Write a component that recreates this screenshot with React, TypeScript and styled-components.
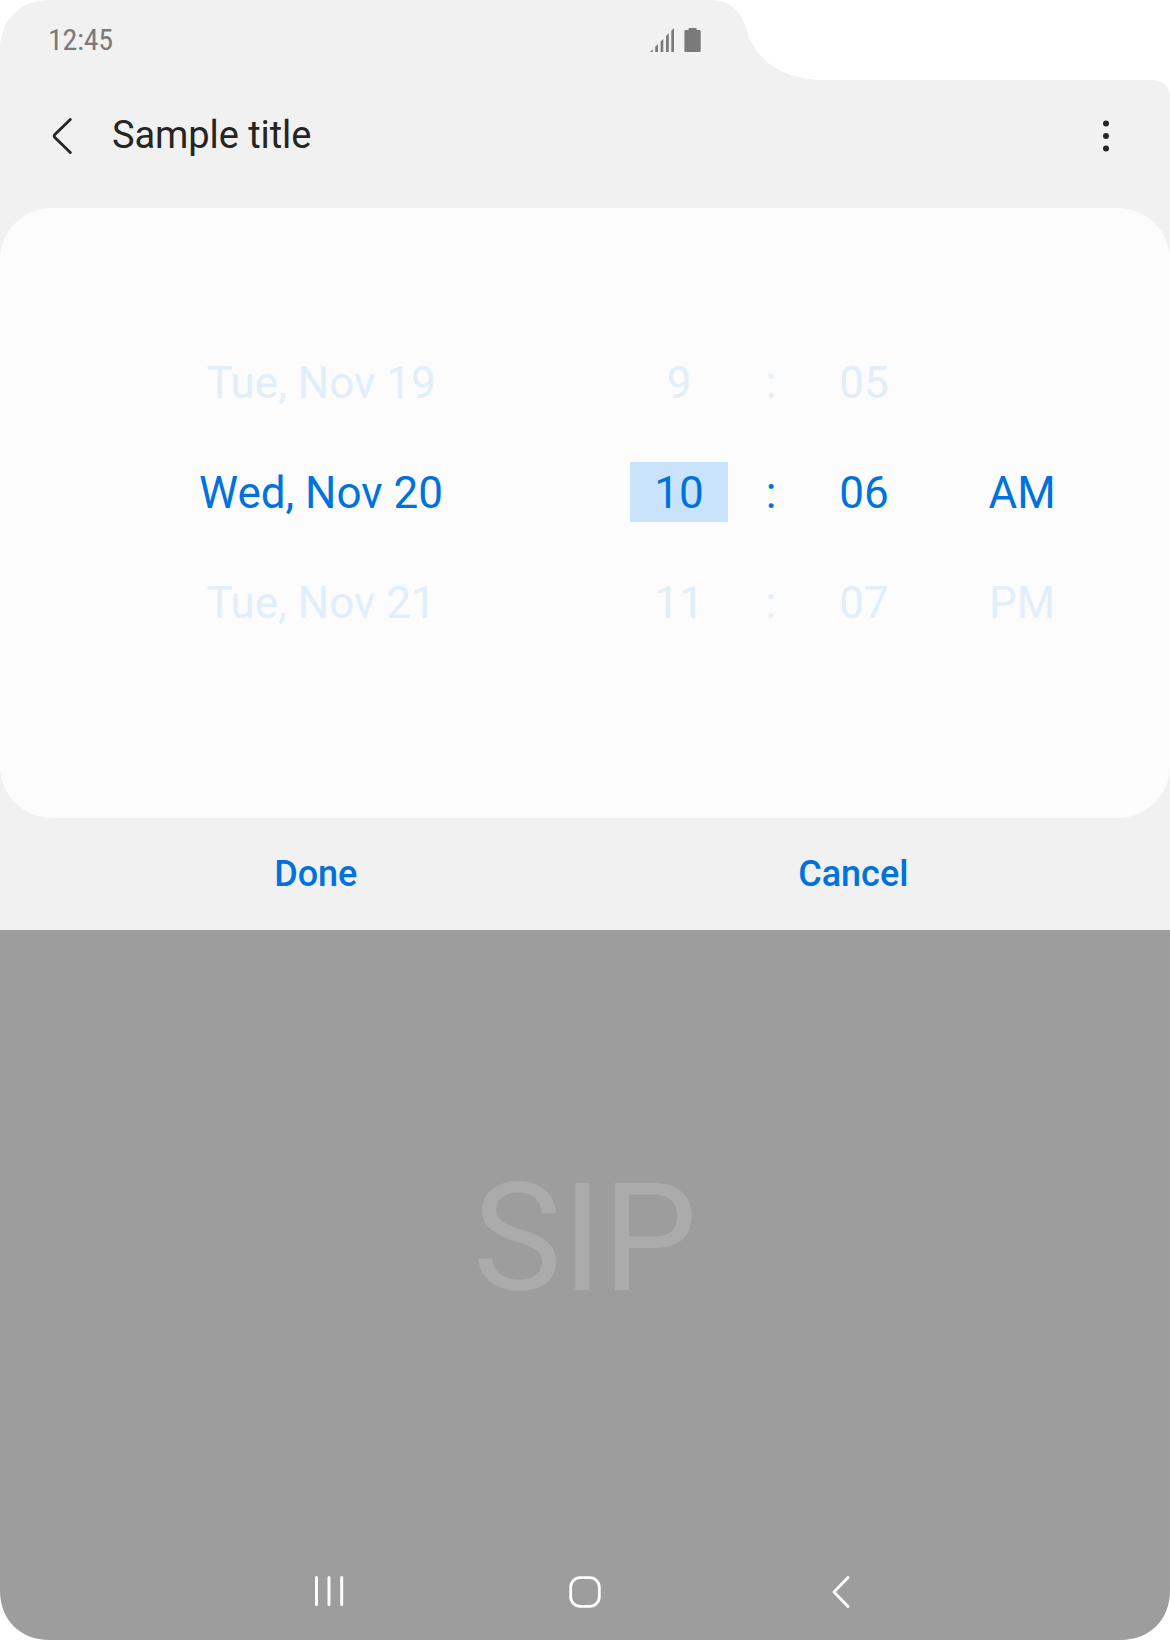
import React from "react";
import styled, { createGlobalStyle } from "styled-components";

const BLUE = "#0072de";
const DIM = "#e2eef9";

const GlobalStyle = createGlobalStyle`
  * { box-sizing: border-box; }
  body {
    margin: 0;
    background: #ffffff;
    font-family: Roboto, "Liberation Sans", sans-serif;
  }
  button {
    border: 0;
    padding: 0;
    background: none;
    font: inherit;
    color: inherit;
  }
  svg { display: block; }
`;

const Screen = styled.div`
  display: flex;
  flex-direction: column;
  width: 1170px;
  height: 1640px;
  overflow: hidden;
  background: #f1f1f1;
  clip-path: path("M0 50 C0 20 20 0 50 0 H712 C728 0 741 11 745.5 27 C753 54 775 80 826 80 H1153 C1163 80 1170 87 1170 97 V1590 C1170 1620 1150 1640 1120 1640 H50 C20 1640 0 1620 0 1590 Z");
`;

const StatusBar = styled.div`
  display: flex;
  align-items: center;
  justify-content: space-between;
  width: 701px;
  height: 80px;
  padding-left: 48px;
  color: #7a7a7a;
`;

const Clock = styled.span`
  font-family: "Roboto Condensed", Roboto, sans-serif;
  font-stretch: condensed;
  font-size: 30px;
  letter-spacing: -0.3px;
  line-height: 36px;
`;

const StatusIcons = styled.div`
  display: flex;
  gap: 10px;
`;

const Header = styled.header`
  display: flex;
  align-items: center;
  height: 128px;
  padding: 0 61px 16px 52px;
  color: #252525;
`;

const Title = styled.h1`
  flex: 1;
  margin: 0 0 0 40px;
  padding-bottom: 2px;
  font-size: 38px;
  font-weight: 400;
  letter-spacing: -0.08px;
  line-height: 46px;
`;

const PickerCard = styled.main`
  height: 610px;
  padding: 120px 0 0 30px;
  border-radius: 52px;
  background: #fcfcfc;
`;

const PickerRow = styled.div<{ $active?: boolean }>`
  display: grid;
  grid-template-columns: 582px 134px 50px 136px 180px;
  align-items: center;
  justify-items: center;
  height: 110px;
  font-size: 44px;
  line-height: 60px;
  color: ${(p) => (p.$active ? BLUE : DIM)};
`;

const Cell = styled.span<{ $selected?: boolean }>`
  ${(p) =>
    p.$selected &&
    `
    width: 98px;
    text-align: center;
    margin-top: -2px;
    padding-top: 1px;
    height: 60px;
    background: #c9e3fc;
  `}
`;

const Actions = styled.div`
  display: grid;
  grid-template-columns: 1fr 1fr;
  height: 112px;
  padding: 0 48px 0 47px;
`;

const ActionButton = styled.button`
  font-size: 36px;
  font-weight: 500;
  color: ${BLUE};
`;

const Keyboard = styled.section`
  display: flex;
  flex: 1;
  flex-direction: column;
  background: #9d9d9d;
`;

const KeyboardLabel = styled.div`
  display: flex;
  flex: 1;
  align-items: center;
  justify-content: center;
  padding-top: 4px;
  font-size: 150px;
  color: #ababab;
`;

const NavBar = styled.nav`
  display: grid;
  grid-template-columns: repeat(3, 256px);
  justify-content: center;
  height: 96px;
`;

const NavButton = styled.button`
  display: flex;
  align-items: center;
  justify-content: center;
  color: #ffffff;
`;

const rows = [
  { date: "Tue, Nov 19", hour: "9", minute: "05", period: "" },
  { date: "Wed, Nov 20", hour: "10", minute: "06", period: "AM" },
  { date: "Tue, Nov 21", hour: "11", minute: "07", period: "PM" },
];
const ACTIVE_ROW = 1;

const SignalIcon = () => (
  <svg width="24" height="24" viewBox="0 0 24 24" fill="currentColor">
    <path d="M0 24L2.7 21.3V24Z M5.2 24V18.8L8 16V24Z M10.6 24V13.4L13.3 10.7V24Z M16 24V8L18.8 5.2V24Z M21.3 24V2.7L24 0V24Z" />
  </svg>
);

const BatteryIcon = () => (
  <svg width="17" height="24" viewBox="0 0 17 24" fill="currentColor">
    <path d="M5.5 0H11.7Q12.7 0 12.7 1V2H15.5Q16.7 2 16.7 3.2V22.8Q16.7 24 15.5 24H1.6Q.4 24 .4 22.8V3.2Q.4 2 1.6 2H4.5V1Q4.5 0 5.5 0Z" />
  </svg>
);

const BackIcon = () => (
  <svg width="20" height="40" viewBox="0 0 20 40" fill="none" stroke="currentColor" strokeWidth="2.8" strokeLinecap="round">
    <path d="M18.3 3.4L2.9 18.5Q1.5 20 2.9 21.5L18.3 36.6" />
  </svg>
);

const MoreIcon = () => (
  <svg width="6" height="32" viewBox="0 0 6 32" fill="currentColor">
    <circle cx="3" cy="3.4" r="3" />
    <circle cx="3" cy="16" r="3" />
    <circle cx="3" cy="28.6" r="3" />
  </svg>
);

const RecentsIcon = () => (
  <svg width="32" height="32" viewBox="0 0 32 32" stroke="currentColor" strokeWidth="3" strokeLinecap="round">
    <path d="M3.5 1.5V28.5M16 1.5V28.5M28.7 1.5V28.5" />
  </svg>
);

const HomeIcon = () => (
  <svg width="32" height="32" viewBox="0 0 32 32" fill="none" stroke="currentColor" strokeWidth="2.8">
    <rect x="1.7" y="1.7" width="28.6" height="28.6" rx="9.5" />
  </svg>
);

const NavBackIcon = () => (
  <svg width="20" height="32" viewBox="0 0 20 32" fill="none" stroke="currentColor" strokeWidth="2.8" strokeLinecap="round" strokeLinejoin="round">
    <path d="M17 1.6L3 16L17 30.4" />
  </svg>
);

export default function App() {
  return (
    <>
      <GlobalStyle />
      <Screen>
        <StatusBar>
          <Clock>12:45</Clock>
          <StatusIcons>
            <SignalIcon />
            <BatteryIcon />
          </StatusIcons>
        </StatusBar>
        <Header>
          <button aria-label="Back">
            <BackIcon />
          </button>
          <Title>Sample title</Title>
          <button aria-label="More options">
            <MoreIcon />
          </button>
        </Header>
        <PickerCard>
          {rows.map((row, i) => (
            <PickerRow key={row.date} $active={i === ACTIVE_ROW}>
              <Cell>{row.date}</Cell>
              <Cell $selected={i === ACTIVE_ROW}>{row.hour}</Cell>
              <Cell>:</Cell>
              <Cell>{row.minute}</Cell>
              <Cell>{row.period}</Cell>
            </PickerRow>
          ))}
        </PickerCard>
        <Actions>
          <ActionButton>Done</ActionButton>
          <ActionButton>Cancel</ActionButton>
        </Actions>
        <Keyboard>
          <KeyboardLabel>SIP</KeyboardLabel>
          <NavBar>
            <NavButton aria-label="Recents">
              <RecentsIcon />
            </NavButton>
            <NavButton aria-label="Home">
              <HomeIcon />
            </NavButton>
            <NavButton aria-label="Back">
              <NavBackIcon />
            </NavButton>
          </NavBar>
        </Keyboard>
      </Screen>
    </>
  );
}
